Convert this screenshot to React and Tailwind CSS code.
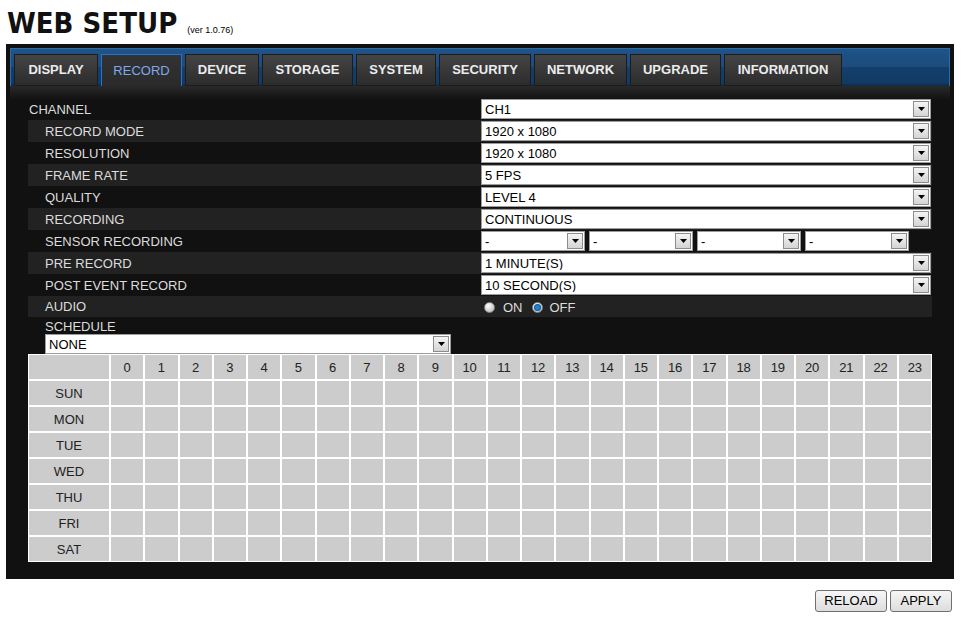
import React from 'react'

const TABS = [
  { name: 'DISPLAY', w: 'w-[84px]' },
  { name: 'RECORD', w: 'w-[81px]', active: true },
  { name: 'DEVICE', w: 'w-[74px]' },
  { name: 'STORAGE', w: 'w-[91px]' },
  { name: 'SYSTEM', w: 'w-[80px]' },
  { name: 'SECURITY', w: 'w-[92px]' },
  { name: 'NETWORK', w: 'w-[93px]' },
  { name: 'UPGRADE', w: 'w-[91px]' },
  { name: 'INFORMATION', w: 'w-[118px]' },
]

const ROWS = [
  { label: 'RECORD MODE', value: '1920 x 1080' },
  { label: 'RESOLUTION', value: '1920 x 1080' },
  { label: 'FRAME RATE', value: '5 FPS' },
  { label: 'QUALITY', value: 'LEVEL 4' },
  { label: 'RECORDING', value: 'CONTINUOUS' },
]

const DAYS = ['SUN', 'MON', 'TUE', 'WED', 'THU', 'FRI', 'SAT']
const HOURS = Array.from({ length: 24 }, (_, i) => i)

function Select({ value, className = '' }) {
  return (
    <div className={`flex items-center h-[20px] bg-white border border-[#9c9c9c] ${className}`}>
      <span className="flex-1 pl-[3px] text-[13px] leading-none text-black truncate">{value}</span>
      <span className="flex items-center justify-center w-[16px] h-[16px] mr-[1px] border border-[#8c8c8c] bg-[linear-gradient(#f4f4f4,#d4d4d4)]">
        <svg width="7" height="4" viewBox="0 0 7 4">
          <path d="M0 0h7L3.5 4z" fill="#000" />
        </svg>
      </span>
    </div>
  )
}

function Radio({ checked }) {
  return (
    <span className="flex items-center justify-center w-[11px] h-[11px] rounded-full border border-[#8a8a8a] bg-[radial-gradient(circle_at_35%_30%,#ffffff,#c8c8c8_70%,#a0a0a0)]">
      {checked && <span className="w-[5px] h-[5px] rounded-full bg-[#1b84d8] ring-1 ring-[#0d5a9c]" />}
    </span>
  )
}

function Row({ label, indent = true, light, children, h = 'h-[22px]' }) {
  return (
    <div className={`flex items-center ${h} ${light ? 'bg-[#222]' : ''}`}>
      <div className={`w-[453px] pt-[1px] text-[13px] text-[#dcdcdc] ${indent ? 'pl-[17px]' : 'pl-[1px]'}`}>{label}</div>
      {children}
    </div>
  )
}

export default function App() {
  return (
    <div className="w-[961px] h-[620px] bg-white font-['Liberation_Sans',Arial,sans-serif]">
      {/* Header */}
      <div className="flex items-baseline h-[44px] pl-[7px] pt-[9px]">
        <h1 className="text-[29px] font-bold leading-none text-[#111] font-['DejaVu_Sans_Condensed','DejaVu_Sans',sans-serif]">
          WEB SETUP
        </h1>
        <span className="ml-[10px] text-[9px] text-black">(ver 1.0.76)</span>
      </div>

      {/* Frame */}
      <div className="ml-[6px] w-[948px] h-[535px] bg-[#111] p-[4px] flex flex-col">
        {/* Tab bar */}
        <div className="h-[38px] pt-[5px] pl-[3px] flex gap-[3px] border border-[#2c6aa8] border-b-0 bg-[linear-gradient(#205386,#1c4b7d_50%,#143f6b_50%,#123a64_92%,#0a2a4c)]">
          {TABS.map(t => (
            <div
              key={t.name}
              className={`${t.w} flex items-center justify-center text-[13px] ${
                t.active
                  ? 'h-[33px] border border-b-0 border-[#1f74d6] bg-[linear-gradient(#333,#2a2a2a)] text-[#7ea8ee]'
                  : 'h-[32px] font-bold border border-[#1c1c1c] bg-[linear-gradient(#444,#2c2c2c)] text-[#ececec]'
              }`}
            >
              {t.name}
            </div>
          ))}
        </div>

        {/* Content */}
        <div className="flex-1 px-[18px] pt-[12px] bg-[linear-gradient(#2a2a2a,#111111_14px)]">
          <Row label="CHANNEL" indent={false}>
            <Select value="CH1" className="w-[450px]" />
          </Row>
          {ROWS.map((r, i) => (
            <Row key={r.label} label={r.label} light={i % 2 === 0}>
              <Select value={r.value} className="w-[450px]" />
            </Row>
          ))}
          <Row label="SENSOR RECORDING">
            <div className="flex gap-[4px]">
              {[0, 1, 2, 3].map(i => (
                <Select key={i} value="-" className="w-[104px]" />
              ))}
            </div>
          </Row>
          <Row label="PRE RECORD" light>
            <Select value="1 MINUTE(S)" className="w-[450px]" />
          </Row>
          <Row label="POST EVENT RECORD">
            <Select value="10 SECOND(S)" className="w-[450px]" />
          </Row>
          <Row label="AUDIO" light h="h-[21px]">
            <div className="flex items-center pl-[3px] pt-[2px] text-[13px] text-[#dcdcdc]">
              <Radio />
              <span className="ml-[8px]">ON</span>
              <span className="ml-[9px]"><Radio checked /></span>
              <span className="ml-[7px]">OFF</span>
            </div>
          </Row>

          {/* Schedule */}
          <div className="h-[17px] pl-[17px] text-[13px] leading-[19px] text-[#dcdcdc]">SCHEDULE</div>
          <Select value="NONE" className="ml-[17px] w-[406px]" />

          <div className="grid grid-cols-[80px_repeat(24,1fr)] auto-rows-[24px] gap-[2px] p-[1px] bg-white text-[13px] text-[#222]">
            <div className="bg-[#ccc]" />
            {HOURS.map(h => (
              <div key={h} className="bg-[#ccc] flex items-center justify-center pt-[1px]">{h}</div>
            ))}
            {DAYS.map(d => (
              <React.Fragment key={d}>
                <div className="bg-[#ccc] flex items-center justify-center pt-[1px]">{d}</div>
                {HOURS.map(h => (
                  <div key={h} className="bg-[#ccc]" />
                ))}
              </React.Fragment>
            ))}
          </div>
        </div>
      </div>

      {/* Actions */}
      <div className="flex justify-end gap-[3px] pr-[9px] mt-[11px]">
        <button className="w-[72px] h-[22px] rounded-[3px] border border-[#707070] bg-[linear-gradient(#f6f6f6,#dddddd)] text-[13px] text-black">
          RELOAD
        </button>
        <button className="w-[62px] h-[22px] rounded-[3px] border border-[#707070] bg-[linear-gradient(#f6f6f6,#dddddd)] text-[13px] text-black">
          APPLY
        </button>
      </div>
    </div>
  )
}
